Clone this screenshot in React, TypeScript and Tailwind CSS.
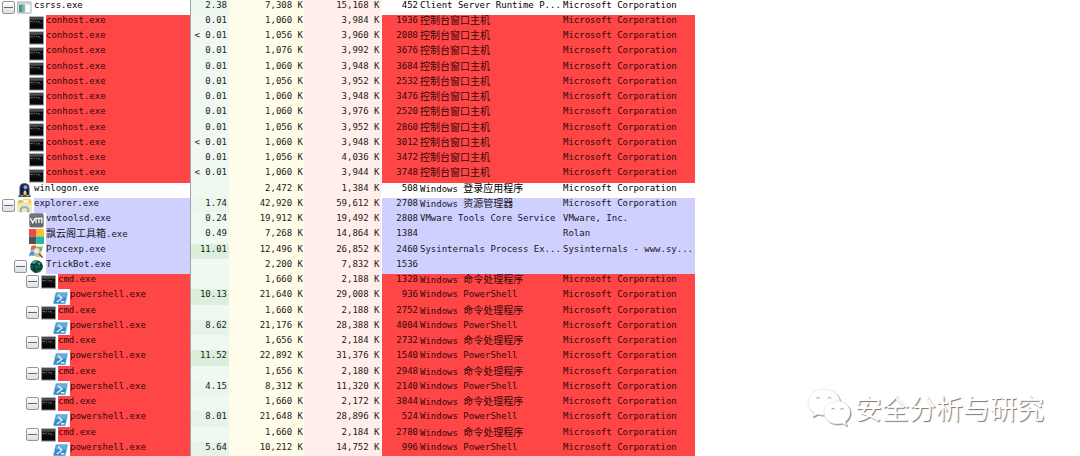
import { useState } from 'react';
import clsx from 'clsx';

type IconName = 'window' | 'console' | 'logon' | 'folder' | 'vm' | 'tiles' | 'procexp' | 'orb' | 'shell';
type Tone = 'plain' | 'red' | 'violet';

interface Process {
  name: string;
  icon: IconName;
  depth: number;
  tone: Tone;
  cpu: string;
  priv: string;
  work: string;
  pid: number;
  desc: string;
  company: string;
  parent?: boolean;
}

const MS = 'Microsoft Corporation';

const conhost = (cpu: string, priv: string, work: string, pid: number): Process => ({
  name: 'conhost.exe', icon: 'console', depth: 1, tone: 'red', cpu, priv, work, pid, desc: '控制台窗口主机', company: MS,
});

const cmd = (priv: string, work: string, pid: number): Process => ({
  name: 'cmd.exe', icon: 'console', depth: 2, tone: 'red', cpu: '', priv, work, pid, desc: 'Windows 命令处理程序', company: MS, parent: true,
});

const shell = (cpu: string, priv: string, work: string, pid: number): Process => ({
  name: 'powershell.exe', icon: 'shell', depth: 3, tone: 'red', cpu, priv, work, pid, desc: 'Windows PowerShell', company: MS,
});

const processes: Process[] = [
  { name: 'csrss.exe', icon: 'window', depth: 0, tone: 'plain', cpu: '2.38', priv: '7,308', work: '15,168', pid: 452, desc: 'Client Server Runtime P...', company: MS, parent: true },
  conhost('0.01', '1,060', '3,984', 1936),
  conhost('< 0.01', '1,056', '3,960', 2080),
  conhost('0.01', '1,076', '3,992', 3676),
  conhost('0.01', '1,060', '3,948', 3684),
  conhost('0.01', '1,056', '3,952', 2532),
  conhost('0.01', '1,060', '3,948', 3476),
  conhost('0.01', '1,060', '3,976', 2520),
  conhost('0.01', '1,056', '3,952', 2860),
  conhost('< 0.01', '1,060', '3,948', 3012),
  conhost('0.01', '1,056', '4,036', 3472),
  conhost('< 0.01', '1,060', '3,944', 3748),
  { name: 'winlogon.exe', icon: 'logon', depth: 0, tone: 'plain', cpu: '', priv: '2,472', work: '1,384', pid: 508, desc: 'Windows 登录应用程序', company: MS },
  { name: 'explorer.exe', icon: 'folder', depth: 0, tone: 'violet', cpu: '1.74', priv: '42,920', work: '59,612', pid: 2708, desc: 'Windows 资源管理器', company: MS, parent: true },
  { name: 'vmtoolsd.exe', icon: 'vm', depth: 1, tone: 'violet', cpu: '0.24', priv: '19,912', work: '19,492', pid: 2808, desc: 'VMware Tools Core Service', company: 'VMware, Inc.' },
  { name: '飘云阁工具箱.exe', icon: 'tiles', depth: 1, tone: 'violet', cpu: '0.49', priv: '7,268', work: '14,864', pid: 1384, desc: '', company: 'Rolan' },
  { name: 'Procexp.exe', icon: 'procexp', depth: 1, tone: 'violet', cpu: '11.01', priv: '12,496', work: '26,852', pid: 2460, desc: 'Sysinternals Process Ex...', company: 'Sysinternals - www.sy...' },
  { name: 'TrickBot.exe', icon: 'orb', depth: 1, tone: 'violet', cpu: '', priv: '2,200', work: '7,832', pid: 1536, desc: '', company: '', parent: true },
  cmd('1,660', '2,188', 1328),
  shell('10.13', '21,640', '29,008', 936),
  cmd('1,660', '2,188', 2752),
  shell('8.62', '21,176', '28,388', 4004),
  cmd('1,656', '2,184', 2732),
  shell('11.52', '22,892', '31,376', 1540),
  cmd('1,656', '2,180', 2948),
  shell('4.15', '8,312', '11,320', 2140),
  cmd('1,660', '2,172', 3844),
  shell('8.01', '21,648', '28,896', 524),
  cmd('1,660', '2,184', 2780),
  shell('5.64', '10,212', '14,752', 996),
];

const toneClass: Record<Tone, string> = {
  plain: 'bg-white text-black',
  red: 'bg-[#ff4646] text-[#330606]',
  violet: 'bg-[#d0d0ff] text-[#16161e]',
};

const indentClass = ['pl-0.5', 'pl-3.5', 'pl-[26px]', 'pl-[38px]'];

function cpuClass(cpu: string) {
  const load = parseFloat(cpu) || 0;
  if (load >= 10) return 'bg-[#dcefdc]';
  if (load >= 5) return 'bg-[#e6f3e8]';
  if (load >= 1) return 'bg-[#ebf6ed]';
  return 'bg-[#eff8f1]';
}

/** Sets the Chinese runs of a string slightly larger than the Latin ones. */
function Mixed({ text }: { text: string }) {
  return (
    <>
      {text.split(/([\u4e00-\u9fff]+)/).map((part, i) =>
        i % 2 ? <span key={i} className="text-[10px]">{part}</span> : part,
      )}
    </>
  );
}

function ProcessIcon({ name }: { name: IconName }) {
  return (
    <svg viewBox="0 0 16 16" className="size-[15px] shrink-0" aria-hidden="true">
      {name === 'window' && (
        <>
          <rect x="0.5" y="2" width="14.5" height="12" rx="0.5" fill="#e9eef3" stroke="#a3adb8" />
          <path d="M1 2.5h13.5v2H1z" fill="#c3ced8" />
          <path d="M2 5h6v8H2z" fill="#4a9486" />
          <path d="M5 5h3v8H5z" fill="#7ab5a2" />
          <path d="M9 5h5v8H9z" fill="#fafcfd" />
        </>
      )}
      {name === 'console' && (
        <>
          <rect x="0.5" y="2" width="15" height="13" fill="#070707" stroke="#9a9ea3" />
          <path d="M1 2.500h14v2.500H1z" fill="#4d5054" />
          <path d="M1.500 6.800h2.500M5 6.500h1.500M7.500 6.500h.8M9 7.200h2.500" stroke="#85888a" strokeWidth="1" />
          <path d="M1.500 9.500Q8 8 14.500 9.500V7L1.500 8z" fill="#2c2d2f" fillOpacity="0.500" />
        </>
      )}
      {name === 'logon' && (
        <>
          <path d="M3 13V5q0-4.500 5-4.500T13 5v8z" fill="#20255c" stroke="#5c5e72" strokeWidth="0.7" />
          <circle cx="9" cy="4.500" r="2" fill="#7eb3dd" />
          <path d="M5 5v8M11.500 7v5" stroke="#171733" strokeWidth="1.600" />
          <path d="M7 9.500l1.500-2 1.500 2v3H7z" fill="#e5d36c" />
          <path d="M1.500 15v-2h13v2z" fill="#4c4c45" />
          <path d="M4 13.500h2M10 13.500h3" stroke="#dad26a" />
        </>
      )}
      {name === 'folder' && (
        <>
          <path d="M0.500 3h5l1-2H14l1.500 2v12H0.500z" fill="#f0cf66" />
          <path d="M2 2.500h3v2H2z" fill="#8dc46c" />
          <path d="M7 2h5v3H7z" fill="#fff9de" />
          <path d="M0.500 5.500h15V14q0 1-1 1H1.500q-1 0-1-1z" fill="#f9e7a3" />
          <path d="M4 15.500v-3q0-3 4-3t4 3v3" fill="none" stroke="#74bde6" strokeWidth="2.200" />
        </>
      )}
      {name === 'vm' && (
        <>
          <rect x="0.300" y="0.300" width="15.400" height="15.200" rx="1.800" fill="#74777a" />
          <path d="M1 8h14v6.500H1z" fill="#65686a" />
          <path d="M1.500 5.500l2.500 5L6.500 5.500M7.500 11V5.800h6.200V11M10.600 6v5" fill="none" stroke="#fff" strokeWidth="1.300" />
        </>
      )}
      {name === 'tiles' && (
        <>
          <path d="M0 0h8v8H0z" fill="#ee4a43" />
          <path d="M8 0h8v8H8z" fill="#fbc12b" />
          <path d="M0 8h8v8H0z" fill="#4c5356" />
          <path d="M8 8h8v8H8z" fill="#22b6a6" />
        </>
      )}
      {name === 'procexp' && (
        <>
          <path d="M2.500 2.500q3-2 5.500-.5L7 7Q4 5.500 1.500 7.500z" fill="#e9643b" />
          <path d="M8.700 2.300q3 1.500 6.300-.3L13.500 7.500Q10.500 9 7.500 7.300z" fill="#75b943" />
          <path d="M1.200 8.500q3-1.700 5.500-.3l-1 4.600Q3 11.500 0 13z" fill="#4a94d5" />
          <path d="M7.300 8.300q3 1.500 6 .2l-1.300 5Q9 14.800 6.300 13z" fill="#f2c43b" />
          <circle cx="8.300" cy="7.500" r="3.500" fill="#e5f1f5" fillOpacity="0.850" stroke="#8ca2ad" strokeWidth="0.800" />
          <path d="M10.800 10.500l3.700 4" stroke="#5b6a70" strokeWidth="1.800" />
        </>
      )}
      {name === 'orb' && (
        <>
          <circle cx="8" cy="8" r="6.800" fill="#115c4a" />
          <path d="M2 6q6-2 12.500 1.500M2 10.500q6 2 12-1M6 1.500q-2 7 1 13" fill="none" stroke="#07372d" strokeWidth="1.500" />
          <path d="M3 4.500q2-3 5-3L6.500 5zM9 4l3 .5-1 2.500z" fill="#48b893" />
        </>
      )}
      {name === 'shell' && (
        <>
          <path d="M4.200 2.500H15q.8 0 .6.800l-2.200 10.500q-.2 1-1.200 1H1q-.8 0-.6-.9L2.800 3.500q.3-1 1.400-1z" fill="#328bc6" stroke="#a9d1eb" strokeWidth="0.700" />
          <path d="M4 3.200h10.800l-1 4.800H3z" fill="#65afdd" />
          <path d="M5.500 5l4 3.700-5.500 4M8.500 12.500h3.700" fill="none" stroke="#eef7fc" strokeWidth="1.400" />
        </>
      )}
    </svg>
  );
}

function Watermark() {
  return (
    <div className="pointer-events-none absolute right-9 bottom-7 flex items-center gap-1">
      <svg viewBox="0 0 44 40" className="h-10 w-11 drop-shadow-[1px_1px_0px_#8c8c8c]" aria-hidden="true">
        <g fill="#fff" stroke="#dedede" strokeWidth="0.600">
          <path d="M17 1C8 1 1 7 1 14.500c0 4.300 2.300 8 6 10.300L5.500 29l5.200-2.700c2 .6 4.100.9 6.300.9 9 0 16-5.900 16-12.900S26 1 17 1z" />
          <path d="M30 13c-7.500 0-13 5.200-13 11.500S22.500 36 30 36c1.800 0 3.500-.3 5-.8l4.500 2.600-1.200-4c3-2.100 4.900-5.500 4.900-9.300C43.200 18.200 37.500 13 30 13z" />
        </g>
        <g fill="none" stroke="#8f8f8f" strokeWidth="0.900">
          <path d="M9.500 10.500q1.500-2.600 3.300 0M21 10.500q1.500-2.600 3.300 0M24.500 21.500q1.500-2.600 3.300 0M33.500 21.500q1.500-2.600 3.300 0" />
        </g>
      </svg>
      <span className="font-['Noto_Sans_CJK_SC',sans-serif] text-[27px] leading-9 text-white [text-shadow:1px_1px_1px_#777]">
        安全分析与研究
      </span>
    </div>
  );
}

export default function App() {
  const [closed, setClosed] = useState<number[]>([]);
  const toggle = (pid: number) =>
    setClosed((list) => (list.includes(pid) ? list.filter((p) => p !== pid) : [...list, pid]));

  let hiddenBelow = Infinity;
  const visible = processes.filter((p) => {
    if (p.depth > hiddenBelow) return false;
    hiddenBelow = closed.includes(p.pid) ? p.depth : Infinity;
    return true;
  });

  return (
    <main className="relative h-screen overflow-hidden bg-white font-['DejaVu_Sans_Mono','Noto_Sans_CJK_SC',monospace] text-[9px] leading-[11px]">
      <table aria-label="Processes" className="w-[695px] table-fixed border-collapse whitespace-nowrap">
        <colgroup>
          <col className="w-[191px]" />
          <col className="w-[38px]" />
          <col className="w-[75px]" />
          <col className="w-[77px]" />
          <col className="w-[38px]" />
          <col className="w-36" />
          <col />
        </colgroup>
        <tbody>
          {visible.map((p) => {
            const tone = toneClass[p.tone];
            return (
              <tr key={p.pid} className="h-[15px] align-top text-[#222] nth-[4n]:h-4">
                <th scope="row" className="h-[inherit] p-0 text-left font-normal">
                  <div className={clsx('flex h-full border-r border-[#a0a5a2]', indentClass[p.depth])}>
                    <div className="flex w-8 shrink-0 items-center gap-0.5">
                      {p.parent ? (
                        <button
                          type="button"
                          aria-label={`Toggle ${p.name}`}
                          aria-expanded={!closed.includes(p.pid)}
                          onClick={() => toggle(p.pid)}
                          className="flex size-[13px] shrink-0 items-center justify-center rounded-xs border border-[#969696] bg-linear-to-b from-white to-[#dedede]"
                        >
                          <span className="h-px w-[9px] bg-[#5269a0]" />
                        </button>
                      ) : (
                        <span className="w-[13px] shrink-0" />
                      )}
                      <ProcessIcon name={p.icon} />
                    </div>
                    <span className={clsx('min-w-0 flex-1', tone)}>
                      <Mixed text={p.name} />
                    </span>
                  </div>
                </th>
                <td className={clsx('p-0 pr-0.5 text-right', cpuClass(p.cpu))}>{p.cpu}</td>
                <td className="bg-[#fffde9] p-0 pr-px text-right">{p.priv} K</td>
                <td className="border-r border-white bg-[#ffeee9] p-0 pr-px text-right">{p.work} K</td>
                <td className={clsx('p-0 pr-px text-right', tone)}>{p.pid}</td>
                <td className={clsx('p-0 pl-px', tone)}>
                  <Mixed text={p.desc} />
                </td>
                <td className={clsx('p-0', tone)}>{p.company}</td>
              </tr>
            );
          })}
        </tbody>
      </table>
      <Watermark />
    </main>
  );
}
